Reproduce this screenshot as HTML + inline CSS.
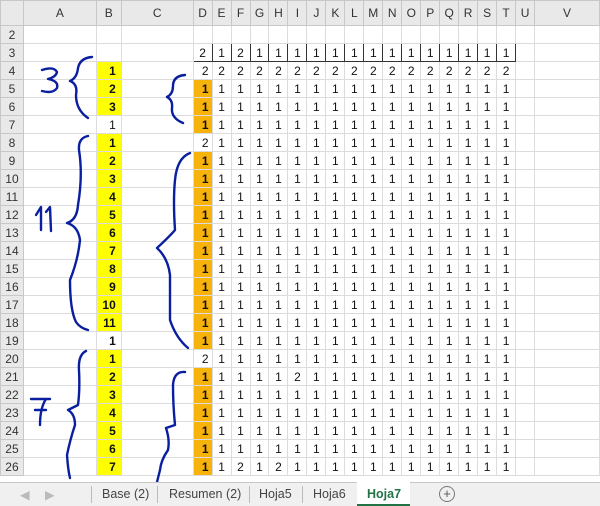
<!DOCTYPE html>
<html><head><meta charset="utf-8"><style>
body{margin:0;width:600px;height:505px;overflow:hidden;background:#fff;font-family:"Liberation Sans",Arial,sans-serif;position:relative}
table{border-collapse:collapse;table-layout:fixed;position:absolute;left:0;top:0}
td,th{height:17px;padding:0;border:1px solid #dcdcdc;font-size:12px;text-align:center;overflow:hidden;white-space:nowrap;color:#111}
thead th{height:24px;background:#e9e9e9;border-color:#c8c8c8;font-weight:normal;color:#333;font-size:12px}
tbody th{background:#e9e9e9;border-color:#c8c8c8;font-weight:normal;color:#333;text-align:center}
td.y{background:#ffff00;font-weight:bold;text-align:right;padding-right:5px}
td.w{font-weight:bold;text-align:right;padding-right:5px}
td.n{text-align:right;padding-right:5px}
td.o{background:#f8b20c;font-weight:bold;text-align:right;padding-right:3px}
td.d{text-align:right;padding-right:3px}
tr.r3 td.b{border:1.5px solid #333}
.tabs{position:absolute;left:0;top:482px;width:600px;height:23px;background:#f0f0f0;border-top:1px solid #c8c8c8;font-size:12.5px;color:#444}
.tabs span{position:absolute;top:4px}
.sep{position:absolute;top:3px;width:1px;height:17px;background:#bbb}
svg{position:absolute;left:0;top:0}
</style></head><body>
<table>
<colgroup><col style="width:23px"><col style="width:73px"><col style="width:25px"><col style="width:72px"><col span="17" style="width:19px"><col style="width:19px"><col style="width:65px"></colgroup>
<thead><tr><th></th><th>A</th><th>B</th><th>C</th><th>D</th><th>E</th><th>F</th><th>G</th><th>H</th><th>I</th><th>J</th><th>K</th><th>L</th><th>M</th><th>N</th><th>O</th><th>P</th><th>Q</th><th>R</th><th>S</th><th>T</th><th>U</th><th>V</th></tr></thead>
<tbody>
<tr><th>2</th><td></td><td></td><td></td><td></td><td></td><td></td><td></td><td></td><td></td><td></td><td></td><td></td><td></td><td></td><td></td><td></td><td></td><td></td><td></td><td></td><td></td><td></td></tr>
<tr class="r3"><th>3</th><td></td><td></td><td></td><td class="b">2</td><td class="b">1</td><td class="b">2</td><td class="b">1</td><td class="b">1</td><td class="b">1</td><td class="b">1</td><td class="b">1</td><td class="b">1</td><td class="b">1</td><td class="b">1</td><td class="b">1</td><td class="b">1</td><td class="b">1</td><td class="b">1</td><td class="b">1</td><td class="b">1</td><td></td><td></td></tr>
<tr><th>4</th><td></td><td class="y">1</td><td></td><td class="d">2</td><td>2</td><td>2</td><td>2</td><td>2</td><td>2</td><td>2</td><td>2</td><td>2</td><td>2</td><td>2</td><td>2</td><td>2</td><td>2</td><td>2</td><td>2</td><td>2</td><td></td><td></td></tr>
<tr><th>5</th><td></td><td class="y">2</td><td></td><td class="o">1</td><td>1</td><td>1</td><td>1</td><td>1</td><td>1</td><td>1</td><td>1</td><td>1</td><td>1</td><td>1</td><td>1</td><td>1</td><td>1</td><td>1</td><td>1</td><td>1</td><td></td><td></td></tr>
<tr><th>6</th><td></td><td class="y">3</td><td></td><td class="o">1</td><td>1</td><td>1</td><td>1</td><td>1</td><td>1</td><td>1</td><td>1</td><td>1</td><td>1</td><td>1</td><td>1</td><td>1</td><td>1</td><td>1</td><td>1</td><td>1</td><td></td><td></td></tr>
<tr><th>7</th><td></td><td class="n">1</td><td></td><td class="o">1</td><td>1</td><td>1</td><td>1</td><td>1</td><td>1</td><td>1</td><td>1</td><td>1</td><td>1</td><td>1</td><td>1</td><td>1</td><td>1</td><td>1</td><td>1</td><td>1</td><td></td><td></td></tr>
<tr><th>8</th><td></td><td class="y">1</td><td></td><td class="d">2</td><td>1</td><td>1</td><td>1</td><td>1</td><td>1</td><td>1</td><td>1</td><td>1</td><td>1</td><td>1</td><td>1</td><td>1</td><td>1</td><td>1</td><td>1</td><td>1</td><td></td><td></td></tr>
<tr><th>9</th><td></td><td class="y">2</td><td></td><td class="o">1</td><td>1</td><td>1</td><td>1</td><td>1</td><td>1</td><td>1</td><td>1</td><td>1</td><td>1</td><td>1</td><td>1</td><td>1</td><td>1</td><td>1</td><td>1</td><td>1</td><td></td><td></td></tr>
<tr><th>10</th><td></td><td class="y">3</td><td></td><td class="o">1</td><td>1</td><td>1</td><td>1</td><td>1</td><td>1</td><td>1</td><td>1</td><td>1</td><td>1</td><td>1</td><td>1</td><td>1</td><td>1</td><td>1</td><td>1</td><td>1</td><td></td><td></td></tr>
<tr><th>11</th><td></td><td class="y">4</td><td></td><td class="o">1</td><td>1</td><td>1</td><td>1</td><td>1</td><td>1</td><td>1</td><td>1</td><td>1</td><td>1</td><td>1</td><td>1</td><td>1</td><td>1</td><td>1</td><td>1</td><td>1</td><td></td><td></td></tr>
<tr><th>12</th><td></td><td class="y">5</td><td></td><td class="o">1</td><td>1</td><td>1</td><td>1</td><td>1</td><td>1</td><td>1</td><td>1</td><td>1</td><td>1</td><td>1</td><td>1</td><td>1</td><td>1</td><td>1</td><td>1</td><td>1</td><td></td><td></td></tr>
<tr><th>13</th><td></td><td class="y">6</td><td></td><td class="o">1</td><td>1</td><td>1</td><td>1</td><td>1</td><td>1</td><td>1</td><td>1</td><td>1</td><td>1</td><td>1</td><td>1</td><td>1</td><td>1</td><td>1</td><td>1</td><td>1</td><td></td><td></td></tr>
<tr><th>14</th><td></td><td class="y">7</td><td></td><td class="o">1</td><td>1</td><td>1</td><td>1</td><td>1</td><td>1</td><td>1</td><td>1</td><td>1</td><td>1</td><td>1</td><td>1</td><td>1</td><td>1</td><td>1</td><td>1</td><td>1</td><td></td><td></td></tr>
<tr><th>15</th><td></td><td class="y">8</td><td></td><td class="o">1</td><td>1</td><td>1</td><td>1</td><td>1</td><td>1</td><td>1</td><td>1</td><td>1</td><td>1</td><td>1</td><td>1</td><td>1</td><td>1</td><td>1</td><td>1</td><td>1</td><td></td><td></td></tr>
<tr><th>16</th><td></td><td class="y">9</td><td></td><td class="o">1</td><td>1</td><td>1</td><td>1</td><td>1</td><td>1</td><td>1</td><td>1</td><td>1</td><td>1</td><td>1</td><td>1</td><td>1</td><td>1</td><td>1</td><td>1</td><td>1</td><td></td><td></td></tr>
<tr><th>17</th><td></td><td class="y">10</td><td></td><td class="o">1</td><td>1</td><td>1</td><td>1</td><td>1</td><td>1</td><td>1</td><td>1</td><td>1</td><td>1</td><td>1</td><td>1</td><td>1</td><td>1</td><td>1</td><td>1</td><td>1</td><td></td><td></td></tr>
<tr><th>18</th><td></td><td class="y">11</td><td></td><td class="o">1</td><td>1</td><td>1</td><td>1</td><td>1</td><td>1</td><td>1</td><td>1</td><td>1</td><td>1</td><td>1</td><td>1</td><td>1</td><td>1</td><td>1</td><td>1</td><td>1</td><td></td><td></td></tr>
<tr><th>19</th><td></td><td class="w">1</td><td></td><td class="o">1</td><td>1</td><td>1</td><td>1</td><td>1</td><td>1</td><td>1</td><td>1</td><td>1</td><td>1</td><td>1</td><td>1</td><td>1</td><td>1</td><td>1</td><td>1</td><td>1</td><td></td><td></td></tr>
<tr><th>20</th><td></td><td class="y">1</td><td></td><td class="d">2</td><td>1</td><td>1</td><td>1</td><td>1</td><td>1</td><td>1</td><td>1</td><td>1</td><td>1</td><td>1</td><td>1</td><td>1</td><td>1</td><td>1</td><td>1</td><td>1</td><td></td><td></td></tr>
<tr><th>21</th><td></td><td class="y">2</td><td></td><td class="o">1</td><td>1</td><td>1</td><td>1</td><td>1</td><td>2</td><td>1</td><td>1</td><td>1</td><td>1</td><td>1</td><td>1</td><td>1</td><td>1</td><td>1</td><td>1</td><td>1</td><td></td><td></td></tr>
<tr><th>22</th><td></td><td class="y">3</td><td></td><td class="o">1</td><td>1</td><td>1</td><td>1</td><td>1</td><td>1</td><td>1</td><td>1</td><td>1</td><td>1</td><td>1</td><td>1</td><td>1</td><td>1</td><td>1</td><td>1</td><td>1</td><td></td><td></td></tr>
<tr><th>23</th><td></td><td class="y">4</td><td></td><td class="o">1</td><td>1</td><td>1</td><td>1</td><td>1</td><td>1</td><td>1</td><td>1</td><td>1</td><td>1</td><td>1</td><td>1</td><td>1</td><td>1</td><td>1</td><td>1</td><td>1</td><td></td><td></td></tr>
<tr><th>24</th><td></td><td class="y">5</td><td></td><td class="o">1</td><td>1</td><td>1</td><td>1</td><td>1</td><td>1</td><td>1</td><td>1</td><td>1</td><td>1</td><td>1</td><td>1</td><td>1</td><td>1</td><td>1</td><td>1</td><td>1</td><td></td><td></td></tr>
<tr><th>25</th><td></td><td class="y">6</td><td></td><td class="o">1</td><td>1</td><td>1</td><td>1</td><td>1</td><td>1</td><td>1</td><td>1</td><td>1</td><td>1</td><td>1</td><td>1</td><td>1</td><td>1</td><td>1</td><td>1</td><td>1</td><td></td><td></td></tr>
<tr><th>26</th><td></td><td class="y">7</td><td></td><td class="o">1</td><td>1</td><td>2</td><td>1</td><td>2</td><td>1</td><td>1</td><td>1</td><td>1</td><td>1</td><td>1</td><td>1</td><td>1</td><td>1</td><td>1</td><td>1</td><td>1</td><td></td><td></td></tr>
</tbody></table>
<svg width="600" height="505" viewBox="0 0 600 505" fill="none" stroke="#0a1fa0" stroke-width="2.4" stroke-linecap="round" stroke-linejoin="round">
<path d="M42 70 Q54 66 57 72 Q56 77 48 79 Q59 81 57 88 Q53 94 42 91"/>
<path d="M92 57 Q80 58 78 68 Q77 78 70 81 Q78 84 76 95 Q76 110 88 118"/>
<path d="M88 136 Q78 138 79 150 Q83 175 78 205 Q77 220 67 223 Q78 226 80 240 Q78 260 70 280 Q70 310 76 322 Q80 328 88 330"/>
<path d="M36 215 L41 207 L41 230 M46 212 L50 207 L51 231"/>
<path d="M31 399 L50 399 M46 399 Q40 408 40 425 M35 410 L46 410"/>
<path d="M86 351 Q78 355 79 370 Q80 390 78 405 L68 410 Q75 414 75 425 Q70 440 67 455 Q68 470 70 478"/>
<path d="M185 75 Q173 76 173 86 Q173 94 167 97 Q173 100 172 108 Q171 118 183 123"/>
<path d="M190 153 Q177 158 175 180 Q173 200 175 230 Q170 236 157 248 Q168 258 170 275 Q170 300 170 320 Q176 338 188 348"/>
<path d="M185 372 Q174 371 173 385 Q173 405 175 425 L166 428 Q170 440 168 450 Q161 460 160 470 L157 482"/>
</svg>
<div class="tabs">
<span style="left:20px;color:#bbb">◀</span><span style="left:45px;color:#bbb">▶</span>
<div class="sep" style="left:91px"></div>
<span style="left:102px">Base (2)</span>
<div class="sep" style="left:157px"></div>
<span style="left:169px">Resumen (2)</span>
<div class="sep" style="left:249px"></div>
<span style="left:259px">Hoja5</span>
<div class="sep" style="left:302px"></div>
<span style="left:313px">Hoja6</span>
<div style="position:absolute;left:357px;top:-1px;width:53px;height:22px;background:#fff;border-bottom:2px solid #217346"></div>
<span style="left:367px;color:#217346;font-weight:bold">Hoja7</span>
<div style="position:absolute;left:439px;top:3px;width:14px;height:14px;border:1px solid #777;border-radius:50%;text-align:center;line-height:14px;font-size:13px;color:#555">+</div>
</div>
</body></html>
